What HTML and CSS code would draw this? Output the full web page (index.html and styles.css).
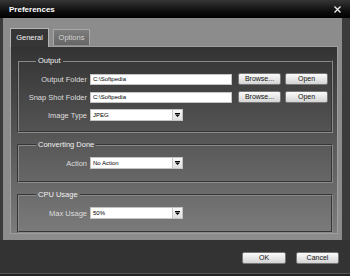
FILE: index.html
```html
<!DOCTYPE html>
<html lang="en">
<head>
    <meta charset="UTF-8">
    <meta name="viewport" content="width=device-width, initial-scale=1.0">
    <title>Preferences</title>
    <link rel="stylesheet" href="styles.css">
</head>
<body>
    <div class="window">
        <div class="titlebar">
            <span class="title">Preferences</span>
            <svg class="close" width="7" height="7" viewBox="0 0 7 7">
                <path d="M0.5 0.5 L6.5 6.5 M6.5 0.5 L0.5 6.5" stroke="#e8e8e8" stroke-width="1.4" fill="none"/>
            </svg>
        </div>
        <div class="main">
            <div class="frame">
                <div class="tabs">
                    <div class="tab active">General</div>
                    <div class="tab">Options</div>
                </div>
                <div class="panel">
                    <fieldset class="group">
                        <legend>Output</legend>
                        <div class="row">
                            <label>Output Folder</label>
                            <input class="text" type="text" value="C:\Softpedia">
                            <button class="btn browse">Browse...</button>
                            <button class="btn open">Open</button>
                        </div>
                        <div class="row">
                            <label>Snap Shot Folder</label>
                            <input class="text" type="text" value="C:\Softpedia">
                            <button class="btn browse">Browse...</button>
                            <button class="btn open">Open</button>
                        </div>
                        <div class="row">
                            <label>Image Type</label>
                            <div class="combo">
                                <span class="value">JPEG</span>
                                <span class="arrow"><svg width="5" height="4" viewBox="0 0 5 4"><rect x="0" y="0" width="5" height="1" fill="#000"/><path d="M0 1.5 H5 L2.5 4 Z" fill="#000"/></svg></span>
                            </div>
                        </div>
                    </fieldset>
                    <fieldset class="group">
                        <legend>Converting Done</legend>
                        <div class="row">
                            <label>Action</label>
                            <div class="combo">
                                <span class="value">No Action</span>
                                <span class="arrow"><svg width="5" height="4" viewBox="0 0 5 4"><rect x="0" y="0" width="5" height="1" fill="#000"/><path d="M0 1.5 H5 L2.5 4 Z" fill="#000"/></svg></span>
                            </div>
                        </div>
                    </fieldset>
                    <fieldset class="group">
                        <legend>CPU Usage</legend>
                        <div class="row">
                            <label>Max Usage</label>
                            <div class="combo">
                                <span class="value">50%</span>
                                <span class="arrow"><svg width="5" height="4" viewBox="0 0 5 4"><rect x="0" y="0" width="5" height="1" fill="#000"/><path d="M0 1.5 H5 L2.5 4 Z" fill="#000"/></svg></span>
                            </div>
                        </div>
                    </fieldset>
                </div>
            </div>
        </div>
        <div class="footer">
            <button class="btn ok">OK</button>
            <button class="btn cancel">Cancel</button>
        </div>
    </div>
</body>
</html>
```

FILE: styles.css
```css
* {
    box-sizing: border-box;
}
body {
    margin: 0;
    width: 350px;
    height: 276px;
    overflow: hidden;
    background: #2d2d2d;
    font-family: "Liberation Sans", Arial, sans-serif;
}
.window {
    width: 350px;
    height: 276px;
    display: flex;
    flex-direction: column;
}
.titlebar {
    height: 18px;
    flex: none;
    display: flex;
    align-items: center;
    justify-content: space-between;
    padding: 0 9px 0 9px;
    background: linear-gradient(#353535, #0c0c0c 65%, #000);
}
.title {
    color: #fff;
    font-weight: bold;
    font-size: 8px;
}
.main {
    flex: none;
    height: 222px;
    display: flex;
    background: #3b3b3b;
}
.frame {
    margin-left: 3px;
    width: 339px;
    background: #8c8c8c;
    padding: 10px 4px 6px 7px;
    display: flex;
    flex-direction: column;
}
.tabs {
    display: flex;
    gap: 4px;
    height: 18px;
    flex: none;
    align-items: flex-start;
    position: relative;
    z-index: 1;
}
.tab {
    width: 37px;
    height: 16px;
    margin-top: 1px;
    text-align: center;
    font-size: 7.5px;
    line-height: 15px;
    color: #d4d4d4;
    background: linear-gradient(#7c7c7c, #666);
    border: 1px solid #a8a8a8;
    border-bottom: none;
}
.tab.active {
    width: 39px;
    height: 19px;
    margin-top: 0;
    line-height: 17px;
    color: #f2f2f2;
    background: #363636;
    border-color: #b4b4b4;
}
.panel {
    flex: 1;
    border: 1px solid #9e9e9e;
    background: linear-gradient(#333, #7b7b7b);
    padding: 0 4px 0 6px;
}
.group {
    margin: 10px 0 0;
    padding: 8px 0 10px;
    border: 2px groove #8a8a8a;
    min-width: 0;
}
.group + .group {
    margin-top: 8px;
    padding-bottom: 12px;
}
.group legend {
    margin-left: 17px;
    padding: 0 2px;
    font-size: 7.5px;
    line-height: 8px;
    color: #f0f0f0;
}
.row {
    display: flex;
    align-items: center;
    height: 12px;
}
.row + .row {
    margin-top: 6px;
}
.row label {
    width: 68px;
    margin-right: 3px;
    text-align: right;
    font-size: 7.5px;
    color: #dedede;
}
.text {
    width: 142px;
    height: 11px;
    margin: 0;
    padding: 0 2px;
    border: 1px solid #c4c4c4;
    background: #fff;
    font-family: "Liberation Sans", Arial, sans-serif;
    font-size: 6px;
    color: #000;
    outline: none;
}
.btn {
    height: 12px;
    margin: 0;
    padding: 0;
    border: 1px solid #777;
    border-radius: 2px;
    background: linear-gradient(#fbfbfb, #d4d4d4);
    font-family: "Liberation Sans", Arial, sans-serif;
    font-size: 7px;
    line-height: 10px;
    color: #111;
}
.browse {
    width: 43px;
    margin-left: 6px;
}
.open {
    width: 43px;
    margin-left: 4px;
}
.combo {
    width: 93px;
    height: 12px;
    display: flex;
    border: 1px solid #c4c4c4;
    background: #fff;
}
.combo .value {
    flex: 1;
    padding-left: 2px;
    font-size: 6px;
    line-height: 10px;
    color: #000;
}
.combo .arrow {
    width: 10px;
    display: flex;
    align-items: center;
    justify-content: center;
    background: linear-gradient(#f8f8f8, #e0e0e0);
    border-left: 1px solid #c8c8c8;
}
.footer {
    flex: 1;
    display: flex;
    justify-content: flex-end;
    gap: 10px;
    padding: 12px 11px 0 0;
    background: linear-gradient(#333 33px, #565656 33px, #565656 34px, #222 34px);
}
.ok {
    width: 44px;
}
.cancel {
    width: 43px;
}
```
